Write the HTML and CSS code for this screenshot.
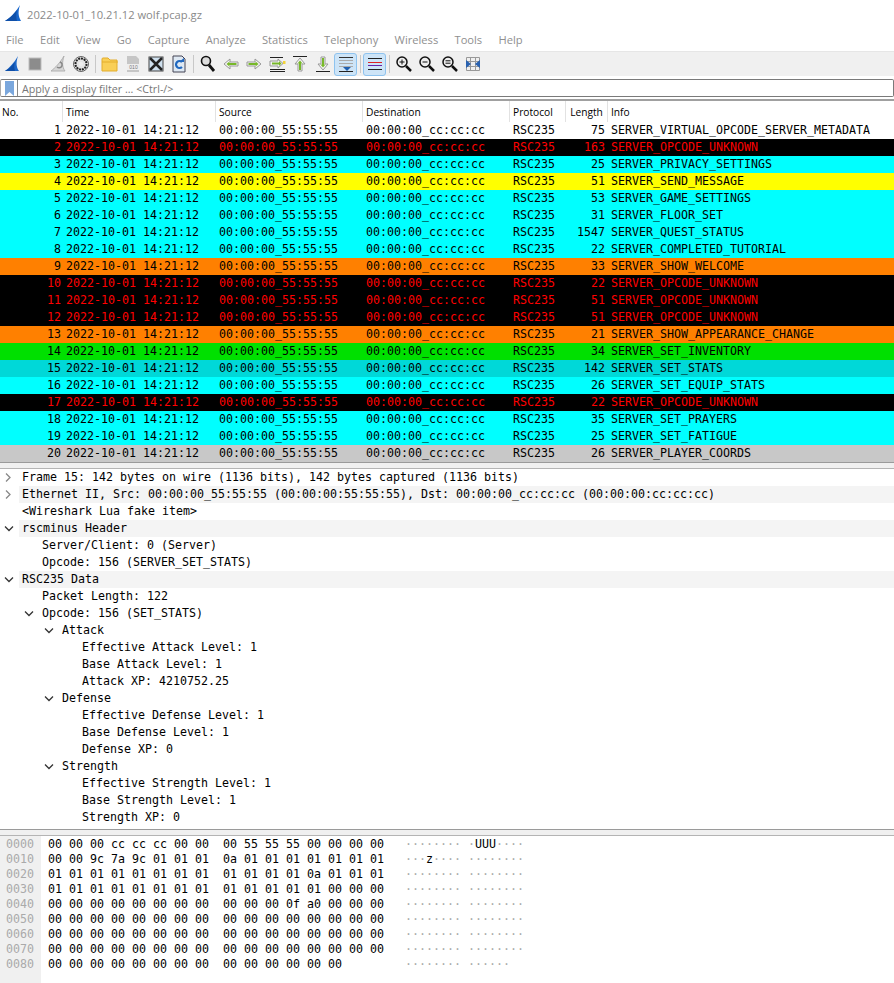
FILE: index.html
```html
<!DOCTYPE html>
<html lang="en">
<head>
<meta charset="UTF-8">
<title>2022-10-01_10.21.12 wolf.pcap.gz</title>
<link rel="stylesheet" href="styles.css">
</head>
<body>
<div class="titlebar">
  <svg class="fin" width="17" height="17" viewBox="0 0 17 17"><path d="M0 16C5 13 11 7 15 0c-2 6-2 11 1 16z" fill="#1766cc"/><path d="M0 16C5 13 9 9 12 5c-1 4-1 8 0 11z" fill="#0f4fa8"/></svg>
  <span>2022-10-01_10.21.12 wolf.pcap.gz</span>
</div>
<div class="menubar">
  <span>File</span><span>Edit</span><span>View</span><span>Go</span><span>Capture</span><span>Analyze</span><span>Statistics</span><span>Telephony</span><span>Wireless</span><span>Tools</span><span>Help</span>
</div>
<div class="toolbar" id="toolbar"></div>
<div class="filterbar">
  <span class="mark"><svg width="9" height="15" viewBox="0 0 9 15"><path d="M0 0h9v15L4.500 11 0 15z" fill="#7aa7dd"/></svg></span>
  <span class="hint">Apply a display filter ... &lt;Ctrl-/&gt;</span>
</div>
<div class="packets">
  <div class="row head"><span class="no">No.</span><span>Time</span><span>Source</span><span>Destination</span><span>Protocol</span><span class="len">Length</span><span>Info</span></div>
  <div id="rows"></div>
</div>
<div class="split"></div>
<div class="details" id="details"></div>
<div class="split"></div>
<div class="hex" id="hex"></div>
<script src="app.js"></script>
</body>
</html>
```
FILE: styles.css
```css
html, body { margin: 0; padding: 0; }
body { width: 894px; height: 983px; overflow: hidden; background: #fff; font-family: "Open Sans", sans-serif; color: #000; }

.titlebar { height: 29px; display: flex; align-items: center; padding-left: 5px; gap: 5px; color: #8a8a8a; font-size: 11.2px; }
.fin { flex: none; margin-bottom: 2px; }

.menubar { height: 20px; margin-bottom: 2px; display: flex; align-items: center; padding-left: 6px; gap: 16.3px; color: #8f8f8f; font-size: 11.15px; }

.toolbar { height: 25px; box-sizing: border-box; background: #f0f0f0; border-top: 1px solid #e6e6e6; display: flex; align-items: center; }
.tool { width: 23px; height: 23px; flex: none; display: flex; align-items: center; justify-content: center; box-sizing: border-box; }
.tool.on { background: #cde4f7; border: 1px solid #8ec3ef; border-radius: 3px; }
.sep { width: 1px; height: 18px; background: #c8c8c8; flex: none; margin: 0 2.5px; }

.filterbar { height: 18px; box-sizing: border-box; margin-top: 3px; border: 1px solid #7a7a7a; border-left-color: #aaa; border-radius: 2px; display: flex; align-items: center; gap: 4px; color: #777; font-size: 10.7px; }
.hint { padding-top: 2px; }
.mark { width: 17px; height: 16px; flex: none; box-sizing: border-box; border-right: 1px solid #888; padding-left: 4px; display: flex; align-items: center; }

.packets { margin-top: 2px; border-top: 2px solid #a0a0a0; }
.row { height: 17px; display: grid; grid-template-columns: 63px 153px 147px 147px 56px 42px 1fr; font-family: "DejaVu Sans Mono", monospace; font-size: 11.63px; line-height: 17px; white-space: nowrap; overflow: hidden; }
.row span { padding-left: 3px; }
.row .no { padding: 0 2px 0 0; text-align: right; }
.row .len { padding: 0 3px 0 0; text-align: right; }
.row.head { height: 21px; line-height: 23px; font-family: "Open Sans", sans-serif; font-size: 10.2px; background: #fff; }
.row.head span { border-right: 1px solid #e2e2e2; box-sizing: border-box; }
.row.head .no { text-align: left; padding-left: 2px; }
.row.head .len { text-align: center; padding: 0; }
.row.head span:last-child { border-right: 0; }

.c { background: #00ffff; }
.k { background: #000; color: #ff0000; }
.y { background: #ffff00; }
.o { background: #ff8000; }
.g { background: #00e000; }
.s { background: #00d8d8; }
.l { background: #c8c8c8; }

.split { height: 7px; box-sizing: border-box; background: #f0f0f0; border-top: 1px solid #9a9a9a; border-bottom: 1px solid #b4b4b4; }

.details { height: 360px; font-family: "DejaVu Sans Mono", monospace; font-size: 11.63px; }
.node { height: 17px; line-height: 17px; white-space: pre; display: flex; }
.node.alt { background: linear-gradient(90deg, #fff 19px, #f4f4f4 19px); }
.d0 { padding-left: 4px; }
.d1 { padding-left: 24px; }
.d2 { padding-left: 44px; }
.d3 { padding-left: 64px; }
.arrow { flex: none; width: 10px; height: 17px; margin-right: 8px; }

.hex { display: grid; grid-template-columns: 41px 1fr; font-family: "DejaVu Sans Mono", monospace; font-size: 11.63px; line-height: 15px; height: 147px; }
.offs { background: #f0f0f0; color: #aaa; padding: 1px 0 0 6px; }
.bytes { white-space: pre; padding: 1px 0 0 7px; }
.dim { color: #aaa; }
```
FILE: app.js
```js
// tool icons, one short svg body per button
const lens = '<circle cx="7" cy="7" r="5" fill="#eee" stroke="#111" stroke-width="1.5"/><path d="M11 11l5 5" stroke="#111" stroke-width="2.5"/>';
const icons = [
  '<path d="M2 16C6 13 11 8 15 1c-2 6-2 11 1 15z" fill="#1f68c8"/><path d="M2 16C6 14 9 11 12 7c-1 3-1 6 0 9z" fill="#0f4fa8"/>',
  '<rect x="3" y="3" width="12" height="12" fill="#8c8c8c" stroke="#bdbdbd"/>',
  '<path d="M2 16C6 13 11 8 15 1c-2 6-2 11 1 15z" fill="#d6d6d6" stroke="#b0b0b0"/><path d="M11 7a3 3 0 1 1-3 5" fill="none" stroke="#888" stroke-width="1.5"/>',
  '<circle cx="9" cy="9" r="7.5" fill="#e4e4e4" stroke="#666"/><circle cx="9" cy="9" r="5.5" fill="none" stroke="#222" stroke-width="2" stroke-dasharray="2 .8"/><circle cx="9" cy="9" r="2.2" fill="#eee"/>',
  '|',
  '<path d="M1 4a1 1 0 0 1 1-1h5l2 2h7v11H1z" fill="#f9cf57" stroke="#e3ad2c"/><path d="M1 7h16" stroke="#e3ad2c"/>',
  '<path d="M3 1h9l3 3v13H3z" fill="#c6c6c6"/><rect x="3" y="9" width="13" height="6" fill="#eee"/><text x="9.5" y="14" font-size="5" font-family="Liberation Sans" text-anchor="middle" fill="#777">010</text>',
  '<rect x="2" y="2" width="14" height="14" fill="#cfe0ee" stroke="#444"/><path d="M3 3l12 12M15 3L3 15" stroke="#222" stroke-width="2.5"/>',
  '<path d="M3 1h9l3 3v13H3z" fill="#dfe9f3" stroke="#445"/><path d="M12 7a3.500 3.500 0 1 0 0 5" fill="none" stroke="#2068c0" stroke-width="2.2"/><path d="M9 7h5V3z" fill="#2068c0"/>',
  '|',
  '<circle cx="7" cy="6" r="4.5" fill="#ddd" stroke="#111" stroke-width="1.6"/><path d="M10 10l5 6" stroke="#111" stroke-width="2.8"/>',
  '<path d="M2 9l6-5v3h8v4H8v3z" fill="#f4f4f4" stroke="#999"/><path d="M4.500 9l3-2.500V8h7v2h-7v1.500z" fill="#78b82a"/>',
  '<path d="M16 9l-6-5v3H2v4h8v3z" fill="#f4f4f4" stroke="#999"/><path d="M13.500 9l-3-2.500V8h-7v2h7v1.500z" fill="#78b82a"/>',
  '<path d="M2 2.500h13M2 14.500h15M2 16.500h15" stroke="#222"/><path d="M2 6h8V4l5 4.500-5 4.500v-2H2z" fill="#f4f4f4" stroke="#999"/><path d="M4 7.500h7V6l2.500 2.500L11 11V9.500H4z" fill="#78b82a"/><rect x="15" y="6" width="2.500" height="3" fill="#f3d33a"/>',
  '<path d="M2 1.500h14" stroke="#222"/><path d="M9 3l5 6h-3v7H7V9H4z" fill="#f4f4f4" stroke="#999"/><path d="M9 5.500L11.500 8.500H10V15H8V8.500H6.500z" fill="#78b82a"/>',
  '<path d="M2 16.500h14" stroke="#222"/><path d="M9 15l5-6h-3V2H7v7H4z" fill="#f4f4f4" stroke="#999"/><path d="M9 12.500L11.500 9.500H10V3H8v6.500H6.500z" fill="#78b82a"/>',
  '<path d="M2 2.500h14" stroke="#333"/><path d="M2 5.500h14M2 8.500h14M2 11.500h14" stroke="#aaa"/><path d="M2 16.500h14" stroke="#222"/><path d="M6 12h8l-4 4z" fill="#1f5fb0"/>',
  '|',
  '<path d="M2 3.500h14" stroke="#222"/><path d="M2 7.500h14" stroke="#d22"/><path d="M2 10.500h14" stroke="#62a"/><path d="M2 14.500h14" stroke="#222"/>',
  '|',
  lens + '<path d="M4.500 7h5M7 4.500v5" stroke="#111"/>',
  lens + '<path d="M4.500 7h5" stroke="#111"/>',
  lens + '<path d="M4.500 5.800h5M4.500 8.200h5" stroke="#111"/>',
  '<path d="M2.500 2.500h13v13h-13zM6.500 2.500v13M11.500 2.500v13M2.500 6.500h13M2.500 11.500h13" fill="none" stroke="#999"/><path d="M2 5l5 4-5 4zM16 5l-5 4 5 4z" fill="#2a62b0"/>'
];
const toolbar = document.getElementById('toolbar');
icons.forEach((body, i) => {
  if (body === '|') { toolbar.insertAdjacentHTML('beforeend', '<div class="sep"></div>'); return; }
  const on = i === 16 || i === 18 ? ' on' : '';
  toolbar.insertAdjacentHTML('beforeend', '<div class="tool' + on + '"><svg width="18" height="18" viewBox="0 0 18 18">' + body + '</svg></div>');
});

const packets = [
  ['', 75, 'SERVER_VIRTUAL_OPCODE_SERVER_METADATA'],
  ['k', 163, 'SERVER_OPCODE_UNKNOWN'],
  ['c', 25, 'SERVER_PRIVACY_SETTINGS'],
  ['y', 51, 'SERVER_SEND_MESSAGE'],
  ['c', 53, 'SERVER_GAME_SETTINGS'],
  ['c', 31, 'SERVER_FLOOR_SET'],
  ['c', 1547, 'SERVER_QUEST_STATUS'],
  ['c', 22, 'SERVER_COMPLETED_TUTORIAL'],
  ['o', 33, 'SERVER_SHOW_WELCOME'],
  ['k', 22, 'SERVER_OPCODE_UNKNOWN'],
  ['k', 51, 'SERVER_OPCODE_UNKNOWN'],
  ['k', 51, 'SERVER_OPCODE_UNKNOWN'],
  ['o', 21, 'SERVER_SHOW_APPEARANCE_CHANGE'],
  ['g', 34, 'SERVER_SET_INVENTORY'],
  ['s', 142, 'SERVER_SET_STATS'],
  ['c', 26, 'SERVER_SET_EQUIP_STATS'],
  ['k', 22, 'SERVER_OPCODE_UNKNOWN'],
  ['c', 35, 'SERVER_SET_PRAYERS'],
  ['c', 25, 'SERVER_SET_FATIGUE'],
  ['l', 26, 'SERVER_PLAYER_COORDS']
];
document.getElementById('rows').innerHTML = packets.map((p, i) =>
  '<div class="row ' + p[0] + '"><span class="no">' + (i + 1) + '</span><span>2022-10-01 14:21:12</span><span>00:00:00_55:55:55</span><span>00:00:00_cc:cc:cc</span><span>RSC235</span><span class="len">' + p[1] + '</span><span>' + p[2] + '</span></div>'
).join('');

// [depth, arrow (r/d/none), striped, text]
const tree = [
  [0, 'r', 0, 'Frame 15: 142 bytes on wire (1136 bits), 142 bytes captured (1136 bits)'],
  [0, 'r', 1, 'Ethernet II, Src: 00:00:00_55:55:55 (00:00:00:55:55:55), Dst: 00:00:00_cc:cc:cc (00:00:00:cc:cc:cc)'],
  [0, '', 0, '<Wireshark Lua fake item>'],
  [0, 'd', 1, 'rscminus Header'],
  [1, '', 0, 'Server/Client: 0 (Server)'],
  [1, '', 0, 'Opcode: 156 (SERVER_SET_STATS)'],
  [0, 'd', 1, 'RSC235 Data'],
  [1, '', 0, 'Packet Length: 122'],
  [1, 'd', 0, 'Opcode: 156 (SET_STATS)'],
  [2, 'd', 0, 'Attack'],
  [3, '', 0, 'Effective Attack Level: 1'],
  [3, '', 0, 'Base Attack Level: 1'],
  [3, '', 0, 'Attack XP: 4210752.25'],
  [2, 'd', 0, 'Defense'],
  [3, '', 0, 'Effective Defense Level: 1'],
  [3, '', 0, 'Base Defense Level: 1'],
  [3, '', 0, 'Defense XP: 0'],
  [2, 'd', 0, 'Strength'],
  [3, '', 0, 'Effective Strength Level: 1'],
  [3, '', 0, 'Base Strength Level: 1'],
  [3, '', 0, 'Strength XP: 0']
];
const arrows = {
  r: '<path d="M2 4.500l4 4-4 4" fill="none" stroke="#888" stroke-width="1.3"/>',
  d: '<path d="M1 6.500l4 4 4-4" fill="none" stroke="#333" stroke-width="1.3"/>'
};
const esc = s => s.replace(/</g, '&lt;');
document.getElementById('details').innerHTML = tree.map(n => {
  const svg = n[1] ? '<svg class="arrow" viewBox="0 0 10 17">' + arrows[n[1]] + '</svg>' : '<span class="arrow"></span>';
  return '<div class="node d' + n[0] + (n[2] ? ' alt' : '') + '">' + svg + '<span>' + esc(n[3]) + '</span></div>';
}).join('');

const hexRows = [
  '00 00 00 cc cc cc 00 00  00 55 55 55 00 00 00 00',
  '00 00 9c 7a 9c 01 01 01  0a 01 01 01 01 01 01 01',
  '01 01 01 01 01 01 01 01  01 01 01 01 0a 01 01 01',
  '01 01 01 01 01 01 01 01  01 01 01 01 01 00 00 00',
  '00 00 00 00 00 00 00 00  00 00 00 0f a0 00 00 00',
  '00 00 00 00 00 00 00 00  00 00 00 00 00 00 00 00',
  '00 00 00 00 00 00 00 00  00 00 00 00 00 00 00 00',
  '00 00 00 00 00 00 00 00  00 00 00 00 00 00 00 00',
  '00 00 00 00 00 00 00 00  00 00 00 00 00 00'
];
const ascii = h => h.split('  ').map(part => part.split(' ').map(b => {
  const c = parseInt(b, 16);
  return c > 32 && c < 127 ? String.fromCharCode(c) : '<span class="dim">·</span>';
}).join('')).join(' ');
document.getElementById('hex').innerHTML =
  '<div class="offs">' + hexRows.map((_, i) => '00' + i.toString(16) + '0').join('<br>') + '</div>' +
  '<div class="bytes">' + hexRows.map(h => h.padEnd(48, ' ') + '   ' + ascii(h)).join('\n') + '</div>';
```
